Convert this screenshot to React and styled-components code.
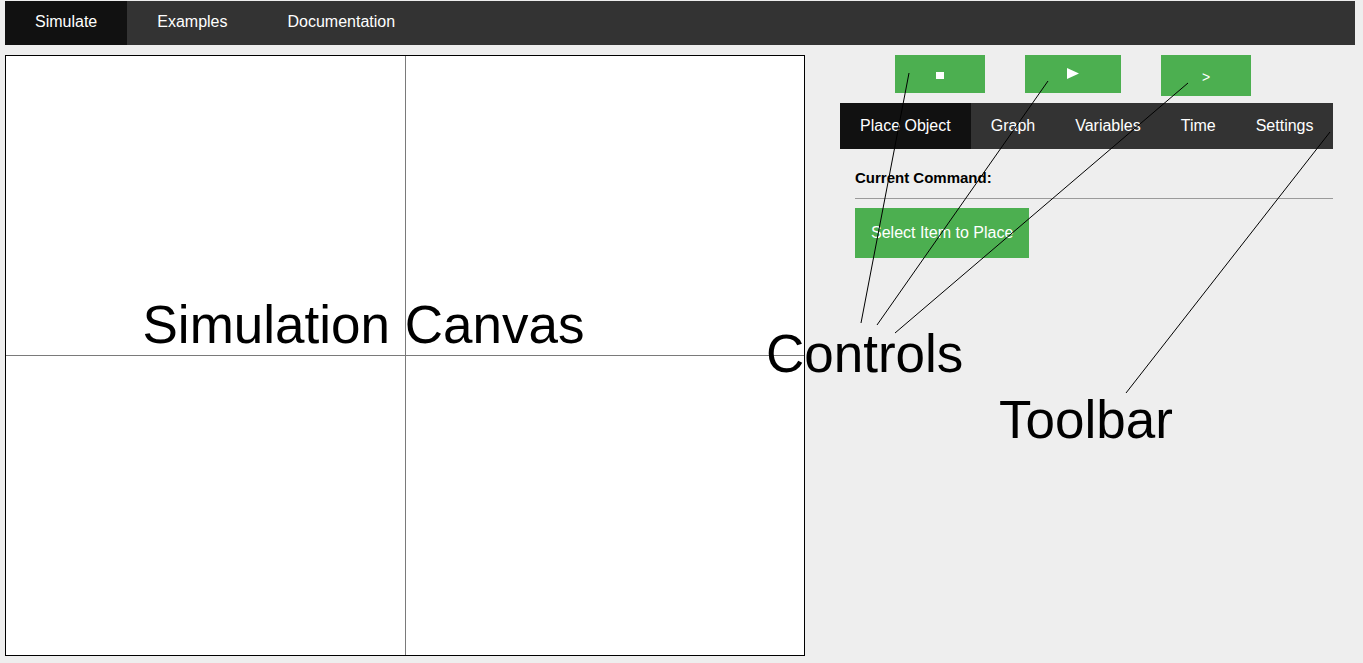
import React from "react";
import styled, { createGlobalStyle } from "styled-components";

const GlobalStyle = createGlobalStyle`
  body {
    margin: 0;
    background: #eeeeee;
    font-family: "Liberation Sans", Arial, sans-serif;
  }
`;

const navItems = ["Simulate", "Examples", "Documentation"];
const toolTabs = ["Place Object", "Graph", "Variables", "Time", "Settings"];

// annotation lines drawn over the page
const pointers = [
  [861, 323, 909, 73],
  [877, 325, 1048, 81],
  [895, 333, 1188, 83],
  [1126, 393, 1330, 132],
];

const labels = [
  { text: "Simulation Canvas", left: 142.5, top: 298 },
  { text: "Controls", left: 766, top: 327 },
  { text: "Toolbar", left: 999, top: 393 },
];

const App = () => {
  return (
    <Page>
      <GlobalStyle />
      <NavBar>
        {navItems.map((item, i) => (
          <NavTab key={item} $active={i === 0}>
            {item}
          </NavTab>
        ))}
      </NavBar>
      <Main>
        <Canvas />
        <Side>
          <Controls>
            <ControlButton $w={90} $h={38}>
              <StopIcon $dy={3} />
            </ControlButton>
            <ControlButton $w={96} $h={38}>
              <PlayIcon viewBox="0 0 12 11" $dy={-1}>
                <polygon points="0,0 12,5.5 0,11" fill="#fff" />
              </PlayIcon>
            </ControlButton>
            <ControlButton $w={90} $h={41}>
              <StepGlyph>&gt;</StepGlyph>
            </ControlButton>
          </Controls>
          <Toolbar>
            {toolTabs.map((tab, i) => (
              <ToolTab key={tab} $active={i === 0}>
                {tab}
              </ToolTab>
            ))}
          </Toolbar>
          <PanelBody>
            <CommandLabel>Current Command:</CommandLabel>
            <Rule />
            <SelectButton>Select Item to Place</SelectButton>
          </PanelBody>
        </Side>
      </Main>
      <Overlay>
        <svg width="1363" height="663">
          {pointers.map(([x1, y1, x2, y2], i) => (
            <line
              key={i}
              x1={x1}
              y1={y1}
              x2={x2}
              y2={y2}
              stroke="#000"
              strokeWidth="1"
            />
          ))}
        </svg>
        {labels.map((l) => (
          <Label key={l.text} style={{ left: l.left, top: l.top }}>
            {l.text}
          </Label>
        ))}
      </Overlay>
    </Page>
  );
};

export default App;

const Page = styled.div`
  position: relative;
  padding: 1px 8px 0 5px;
  min-height: 662px;
`;

const NavBar = styled.nav`
  display: flex;
  height: 44px;
  background: #333333;
`;

const NavTab = styled.div`
  padding: 12px 30px 14px;
  line-height: 18px;
  font-size: 16px;
  color: #ffffff;
  white-space: nowrap;
  background: ${(p) => (p.$active ? "#111111" : "transparent")};
`;

const Main = styled.main`
  display: flex;
  align-items: flex-start;
  gap: 35px;
  margin-top: 10px;
`;

const Canvas = styled.div`
  flex-shrink: 0;
  width: 800px;
  height: 601px;
  box-sizing: border-box;
  border: 1px solid #000;
  background-color: #ffffff;
  background-image: linear-gradient(
      to right,
      transparent 399px,
      #7a7a7a 399px,
      #7a7a7a 400px,
      transparent 400px
    ),
    linear-gradient(
      to bottom,
      transparent 299px,
      #7a7a7a 299px,
      #7a7a7a 300px,
      transparent 300px
    );
`;

const Side = styled.section`
  display: flex;
  flex-direction: column;
  flex-shrink: 0;
  width: 493px;
`;

const Controls = styled.div`
  display: flex;
  align-items: flex-start;
  gap: 40px;
  padding-left: 55px;
  margin-bottom: 7px;
`;

const ControlButton = styled.button`
  display: flex;
  align-items: center;
  justify-content: center;
  width: ${(p) => p.$w}px;
  height: ${(p) => p.$h}px;
  padding: 0;
  border: none;
  background: #4caf50;
  color: #ffffff;
`;

const StopIcon = styled.span`
  display: block;
  width: 8px;
  height: 7px;
  background: #ffffff;
  margin-top: ${(p) => p.$dy}px;
`;

const PlayIcon = styled.svg`
  width: 12px;
  height: 11px;
  margin-top: ${(p) => p.$dy}px;
`;

const StepGlyph = styled.span`
  font-family: "Liberation Sans", Arial, sans-serif;
  font-size: 14px;
  line-height: 14px;
  margin-top: 2px;
`;

const Toolbar = styled.div`
  display: flex;
  background: #333333;
`;

const ToolTab = styled.div`
  flex-shrink: 0;
  padding: 14px 20px;
  line-height: 18px;
  font-size: 16px;
  color: #ffffff;
  white-space: nowrap;
  background: ${(p) => (p.$active ? "#111111" : "transparent")};
`;

const PanelBody = styled.div`
  display: flex;
  flex-direction: column;
  align-items: flex-start;
  padding: 20px 0 0 15px;
`;

const CommandLabel = styled.div`
  font-size: 15px;
  font-weight: bold;
  line-height: 17px;
  color: #000;
`;

const Rule = styled.div`
  align-self: stretch;
  border-top: 1px solid #9a9a9a;
  margin: 12px 0 9px;
`;

const SelectButton = styled.button`
  padding: 16px;
  border: none;
  background: #4caf50;
  color: #ffffff;
  font-family: inherit;
  font-size: 16px;
  line-height: 18px;
`;

const Overlay = styled.div`
  position: absolute;
  top: 0;
  left: 0;
  width: 1363px;
  height: 663px;
  pointer-events: none;

  svg {
    position: absolute;
    top: 0;
    left: 0;
  }
`;

const Label = styled.span`
  position: absolute;
  font-size: 53px;
  line-height: 1;
  color: #000;
  white-space: nowrap;
`;
